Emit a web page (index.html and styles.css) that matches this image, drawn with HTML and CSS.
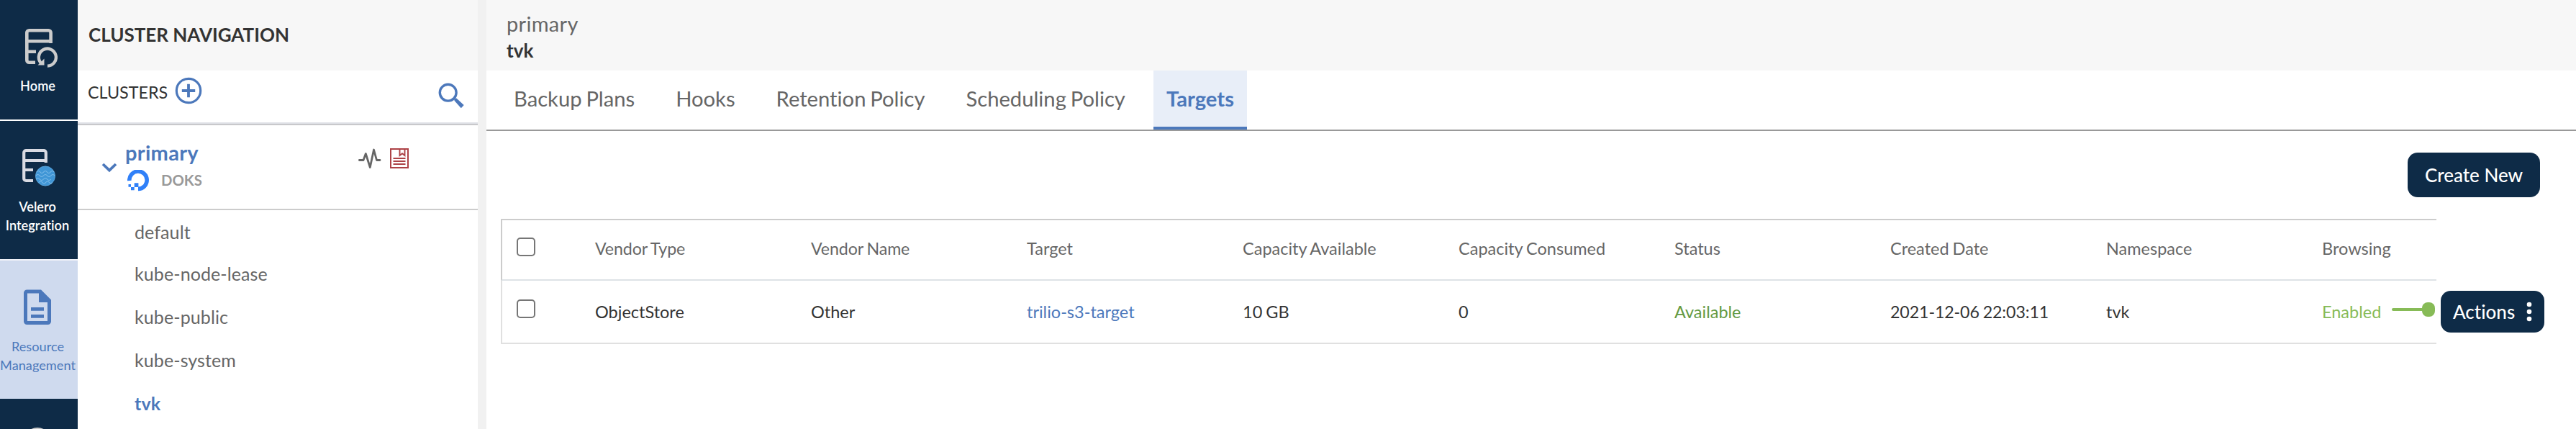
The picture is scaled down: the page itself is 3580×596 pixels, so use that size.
FILE: index.html
```html
<!DOCTYPE html>
<html lang="en">
<head>
<meta charset="utf-8">
<title>Targets</title>
<link rel="stylesheet" href="styles.css">
</head>
<body>
<div class="app">
  <nav class="rail">
    <a class="rail-item rail-home">
      <svg class="rail-icon" width="48" height="56" viewBox="0 0 48 56" fill="none" stroke="#ccc" stroke-width="4.6">
        <path d="M38.600 21V6.500a3.200 3.200 0 0 0-3.200-3.200H8.500a3.200 3.200 0 0 0-3.200 3.200v38a3.200 3.200 0 0 0 3.200 3.200H17M5.300 18.300h33.300M5.300 32.700H18"/>
        <path d="M34 52.600a12 12 0 1 0-8.300-3.200" stroke-width="4.300"/>
        <path d="M20.500 51.500l9-9v9z" fill="#ccc" stroke="none"/>
      </svg>
      <span>Home</span>
    </a>
    <a class="rail-item rail-velero">
      <svg class="rail-icon" width="48" height="56" viewBox="0 0 48 56" fill="none" stroke="#d9dbe3" stroke-width="4.200">
        <path d="M34.800 20V6a3 3 0 0 0-3-3H7.200a3 3 0 0 0-3 3v36a3 3 0 0 0 3 3H17M4.200 17h30.600M4.200 30H17"/>
        <circle cx="34" cy="38.500" r="13.500" fill="#4096d6" stroke="#5aa6dd" stroke-width="1"/>
        <g stroke="#7dbbe8" stroke-width="1.100">
          <path d="M22 33q2.400-3 4.800 0t4.800 0 4.800 0 4.800 0 4.800 0"/>
          <path d="M21 38q2.600-3 5.200 0t5.200 0 5.200 0 5.200 0 5.200 0"/>
          <path d="M21 43q2.600-3 5.200 0t5.200 0 5.200 0 5.200 0"/>
          <path d="M25 47.500q2.400-3 4.800 0t4.800 0 4.800 0 4 0"/>
        </g>
      </svg>
      <span>Velero<br>Integration</span>
    </a>
    <a class="rail-item rail-resource">
      <svg class="rail-icon" width="40" height="50" viewBox="0 0 40 50">
        <path fill="#4c78bb" fill-rule="evenodd" d="M5.500 0.500H25L39 14.500V44.500a4.500 4.500 0 0 1-4.500 4.500H5.500A4.500 4.500 0 0 1 1 44.500V5A4.500 4.500 0 0 1 5.500 0.500zM6 5.500V44H34V18H22V5.500zM11 25h18v4.700H11zM11 35h18v4.700H11z"/>
      </svg>
      <span>Resource<br>Management</span>
    </a>
    <a class="rail-item rail-next">
      <svg class="rail-icon" width="40" height="40" viewBox="0 0 40 40" fill="none" stroke="#ccc" stroke-width="4"><circle cx="20" cy="20" r="17"/></svg>
    </a>
  </nav>

  <aside class="clusters">
    <header class="clusters-title">CLUSTER NAVIGATION</header>
    <div class="clusters-bar">
      <span class="clusters-label">CLUSTERS</span>
      <svg class="add" width="38" height="38" viewBox="0 0 38 38" fill="none" stroke="#4c78bb"><circle cx="19" cy="19" r="16.700" stroke-width="3.200"/><path d="M19 9.800v18.400M9.800 19h18.400" stroke-width="3.800"/></svg>
      <svg class="search" width="36" height="36" viewBox="0 0 36 36" fill="none" stroke="#4c78bb"><circle cx="13.700" cy="13.700" r="11.400" stroke-width="3.400"/><path d="M22 22l3.400-.4 10.300 9.400-3.900 4.300-9.200-10.200z" fill="#4c78bb" stroke="none"/></svg>
    </div>
    <div class="cluster">
      <svg class="chevron" width="22" height="14" viewBox="0 0 22 14" fill="none" stroke="#4c78bb" stroke-width="3.800"><path d="M2 2l9 8.600L20 2"/></svg>
      <div class="cluster-info">
        <div class="cluster-name">primary</div>
        <div class="provider">
          <svg width="30" height="30" viewBox="0 0 30 30"><path d="M2.800 15A12.200 12.200 0 1 1 15 26.400" fill="none" stroke="#3080f8" stroke-width="5.600"/><path fill="#3080f8" d="M9.700 18.300h5.700v5.700H9.700zM5 24h4.700v4.300H5zM1.500 20H5v3.800H1.500z"/></svg>
          <span>DOKS</span>
        </div>
      </div>
      <svg class="pulse" width="34" height="28" viewBox="0 0 34 28" fill="none" stroke="#666" stroke-width="2.800" stroke-linecap="round" stroke-linejoin="round"><path d="M2.400 16.500H8l3.300-9 6 19L22.500 2l4 14.500H31"/></svg>
      <svg class="book" width="26" height="28" viewBox="0 0 26 28" fill="none" stroke="#ad4246"><path d="M1 1h24v26H1z" stroke-width="2"/><path d="M13.500 2v8l3.500-2.700 3.500 2.700V2M4.500 14h17M4.500 18h17M4.500 22h17" stroke-width="1.900"/></svg>
    </div>
    <ul class="namespaces">
      <li>default</li>
      <li>kube-node-lease</li>
      <li>kube-public</li>
      <li>kube-system</li>
      <li class="selected">tvk</li>
    </ul>
  </aside>

  <div class="splitter"></div>

  <main class="content">
    <header class="crumbs">
      <div class="crumb">primary</div>
      <div class="crumb-current">tvk</div>
    </header>
    <div class="tabs">
      <a class="tab">Backup Plans</a>
      <a class="tab">Hooks</a>
      <a class="tab">Retention Policy</a>
      <a class="tab">Scheduling Policy</a>
      <a class="tab active">Targets</a>
    </div>
    <div class="toolbar"><button class="btn create">Create New</button></div>
    <div class="table-wrap">
      <div class="table">
        <div class="row head">
          <span class="check"></span>
          <span class="tight">Vendor Type</span><span class="tight">Vendor Name</span><span>Target</span><span>Capacity Available</span><span>Capacity Consumed</span><span>Status</span><span>Created Date</span><span>Namespace</span><span>Browsing</span>
        </div>
        <div class="row data">
          <span class="check"></span>
          <span>ObjectStore</span><span>Other</span><span class="link">trilio-s3-target</span><span>10 GB</span><span>0</span><span class="ok">Available</span><span class="tight">2021-12-06 22:03:11</span><span>tvk</span>
          <span class="enabled">Enabled<i class="switch"><i class="knob"></i></i></span>
        </div>
      </div>
      <button class="btn actions">Actions
        <svg width="8" height="28" viewBox="0 0 8 28" fill="#fff"><circle cx="4" cy="4" r="3.300"/><circle cx="4" cy="14" r="3.300"/><circle cx="4" cy="24" r="3.300"/></svg>
      </button>
    </div>
  </main>
</div>
</body>
</html>
```

FILE: styles.css
```css
* { box-sizing: border-box; }
body { margin: 0; font-family: Lato, "Open Sans", sans-serif; font-variant-ligatures: none; background: #fff; color: #333; }
.app { display: flex; width: 3580px; height: 596px; overflow: hidden; }

.rail { width: 108px; flex: none; background: #0e2b47; }
.rail-item { display: flex; flex-direction: column; align-items: center; color: #fff; font-size: 18.2px; line-height: 26px; text-align: center; font-weight: 600; }
.rail-icon { display: block; flex: none; }
.rail-home { height: 168px; padding-top: 39px; border-bottom: 2px solid #fff; }
.rail-home .rail-icon { margin-left: 4px; }
.rail-home span { margin-top: 11px; margin-right: 3px; }
.rail-velero { height: 194px; padding-top: 38px; border-bottom: 2px solid #f0f2f8; }
.rail-velero .rail-icon { margin-right: 2px; }
.rail-velero span { margin-top: 12px; margin-right: 4px; }
.rail-resource { height: 192px; padding-top: 40px; background: #cfdaee; color: #4c78bb; font-weight: 400; }
.rail-resource .rail-icon { margin-right: 4px; }
.rail-resource span { margin-top: 16px; margin-right: 3px; }
.rail-next { height: 192px; padding: 39px 4px 0 0; }

.clusters { width: 556px; flex: none; }
.clusters-title { height: 98px; padding-left: 15px; background: #f7f7f7; font-size: 26px; line-height: 96px; font-weight: 700; }
.clusters-bar { display: flex; height: 76px; padding-left: 14px; border-bottom: 2px solid #c8c8cb; box-shadow: inset 0 -2px #dfe1e6; }
.clusters-label { width: 111px; font-size: 23.3px; line-height: 61px; }
.add { margin: 9px 0 0 10px; }
.search { margin: 17px 19px 0 auto; }
.cluster { display: flex; height: 118px; border-bottom: 2px solid #ccc; }
.chevron { margin: 52px 0 0 33px; }
.cluster-info { width: 207px; margin-left: 11px; }
.cluster-name { margin-top: 21px; font-size: 29px; line-height: 34px; letter-spacing: .3px; font-weight: 700; color: #4c78bb; }
.provider { display: flex; gap: 17px; margin: 7px 0 0 3px; font-size: 20.3px; line-height: 28px; font-weight: 700; color: #999; }
.pulse { margin: 32px 0 0 116px; }
.book { margin: 32px 0 0 11px; }
.namespaces { margin: 0; padding: 0 0 0 79px; list-style: none; font-size: 25px; line-height: 60px; letter-spacing: .1px; color: #666; }
.namespaces li:first-child { height: 58px; }
.selected { color: #4c78bb; font-weight: 700; }

.splitter { width: 12px; flex: none; background: #f1f1f1; }

.content { flex: 1; min-width: 0; }
.crumbs { height: 98px; padding: 15px 0 0 28px; background: #f7f7f7; font-size: 26px; line-height: 36px; }
.crumb { height: 37px; font-size: 29px; letter-spacing: .3px; color: #666; }
.crumb-current { font-weight: 700; }
.tabs { display: flex; gap: 21px; height: 84px; padding-left: 20px; border-bottom: 2px solid #999; font-size: 29.2px; line-height: 78px; word-spacing: -1.6px; color: #666; }
.tab { padding: 0 18px; border-bottom: 4px solid transparent; }
.tab.active { background: #e8eef8; border-color: #4c78bb; color: #4c78bb; font-weight: 700; }
.toolbar { display: flex; justify-content: flex-end; height: 122px; padding: 30px 50px 0 0; }
.btn { border: 0; border-radius: 14px; background: #0e2b47; color: #fff; font: 500 26px Lato, "Open Sans", sans-serif; font-variant-ligatures: none; padding: 0; }
.create { width: 184px; height: 62px; }
.table-wrap { display: flex; padding-left: 20px; }
.table { width: 2690px; }
.row { display: grid; grid-template-columns: 129px repeat(8, 300px) 157px; font-size: 23.5px; word-spacing: -1px; white-space: nowrap; }
.head { height: 86px; border: 2px solid #ccc; border-right: 0; border-bottom-color: #dee2e6; line-height: 78px; color: #666; }
.data { height: 88px; border: 2px solid #e0e0e0; border-width: 0 0 2px 2px; line-height: 86px; }
.tight { font-size: 23.2px; letter-spacing: -.1px; }
.check { width: 26px; height: 26px; margin: 24px 0 0 20px; border: 2px solid #767676; border-radius: 5px; }
.data .check { margin-top: 26px; }
.link { color: #4c78bb; }
.ok { color: #649a43; }
.enabled { display: flex; color: #87bb57; }
.switch { display: flex; align-items: center; justify-content: flex-end; width: 60px; height: 4px; margin: 38px 0 0 auto; border-radius: 2px; background: #87bb57; }
.knob { flex: none; width: 18px; height: 20px; border-radius: 8px; background: #87bb57; }
.actions { display: flex; align-items: center; justify-content: space-between; width: 144px; height: 58px; margin: 100px 0 0 6px; padding: 0 17px; }
```
